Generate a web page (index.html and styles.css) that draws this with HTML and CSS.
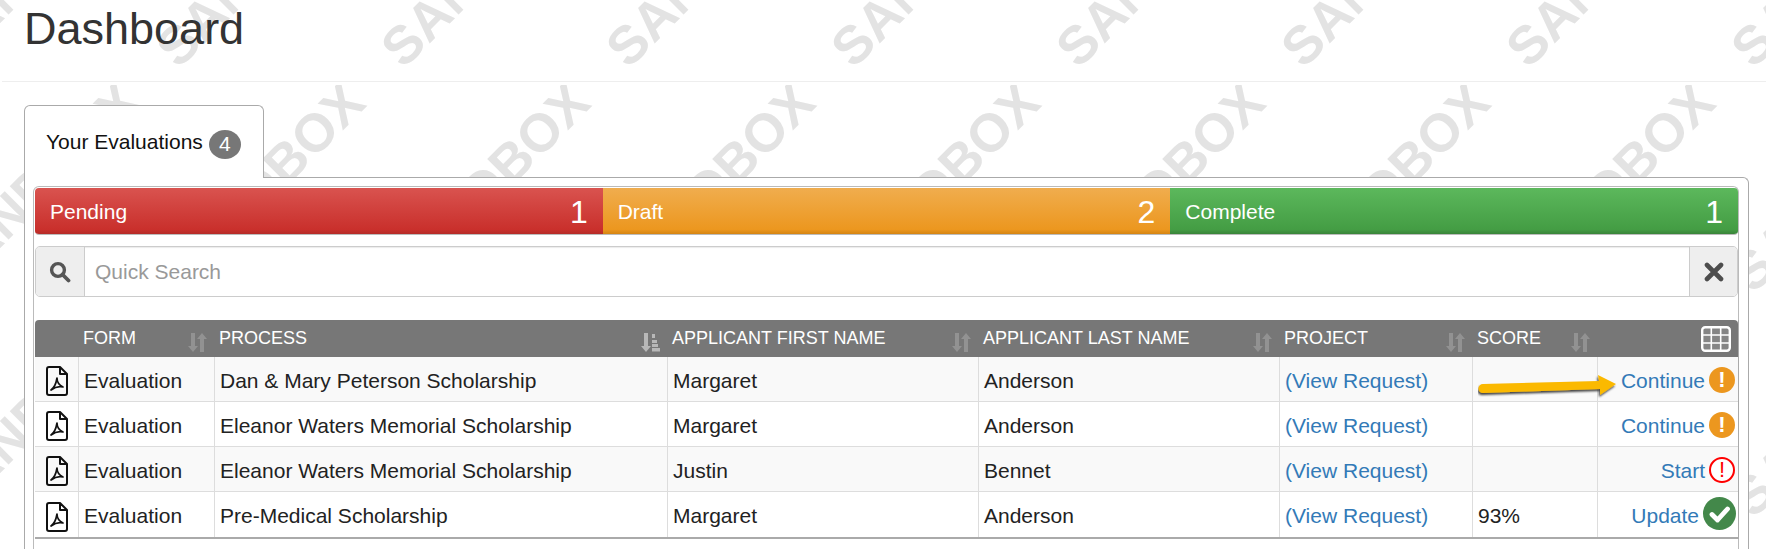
FILE: index.html
```html
<!DOCTYPE html>
<html lang="en">
<head>
<meta charset="utf-8">
<title>Dashboard</title>
<link rel="stylesheet" href="styles.css">
</head>
<body>
<svg class="watermark" width="1766" height="549" aria-hidden="true">
  <defs>
    <pattern id="wm" x="0" y="85" width="225" height="225" patternUnits="userSpaceOnUse">
      <text class="wm-text" transform="translate(35 102) rotate(-45)">SANDBOX</text>
      <text class="wm-text" transform="translate(260 102) rotate(-45)">SANDBOX</text>
    </pattern>
    <symbol id="i-sort" viewBox="0 0 19 19"><path d="M3 0h4v13h3l-5 6-5-6h3zM12 19h4V6h3l-5-6-5 6h3z" fill="#929292"/></symbol>
    <symbol id="i-sorted" viewBox="0 0 19 19"><path d="M3 0h4v13h3l-5 6-5-6h3z" fill="#b8b8b8"/><path d="M11 1h3v4h-3zM11 7h5v3h-5zM11 11h6v3h-6zM11 15h8v3.500h-8z" fill="#b8b8b8"/></symbol>
    <symbol id="i-pdf" viewBox="0 0 22 30"><path d="M3 1h11l7 7v19a2 2 0 0 1-2 2H3a2 2 0 0 1-2-2V3a2 2 0 0 1 2-2zM14 1v7h7" fill="none" stroke="#111" stroke-width="2" stroke-linejoin="round"/><path d="M5 24c3-2 5-6 6-12 0 5 2 7 6 9-4-1-8 0-12 3z" fill="none" stroke="#111" stroke-width="1.7" stroke-linejoin="round"/></symbol>
  </defs>
  <rect width="1766" height="549" fill="url(#wm)"/>
</svg>
<header class="page-head"><h1>Dashboard</h1></header>
<main class="content">
  <div class="tab"><span>Your Evaluations</span><span class="badge">4</span></div>
  <section class="panel">
    <div class="inner">
      <div class="progress">
        <div class="seg seg-red"><span>Pending</span><b>1</b></div>
        <div class="seg seg-orange"><span>Draft</span><b>2</b></div>
        <div class="seg seg-green"><span>Complete</span><b>1</b></div>
      </div>
      <div class="search">
        <div class="addon addon-l">
          <svg width="22" height="22" viewBox="0 0 22 22"><circle cx="9" cy="9" r="6.4" fill="none" stroke="#555" stroke-width="3.400"/><path d="M13.500 13.500L19.500 19.500" stroke="#555" stroke-width="3.800" stroke-linecap="round"/></svg>
        </div>
        <div class="search-input">Quick Search</div>
        <div class="addon addon-r">
          <svg width="20" height="20" viewBox="0 0 20 20"><path d="M3 3L17 17M17 3L3 17" stroke="#4d4d4d" stroke-width="4.600" stroke-linecap="round"/></svg>
        </div>
      </div>
      <table class="grid">
        <colgroup><col class="c0"><col class="c1"><col class="c2"><col class="c3"><col class="c4"><col class="c5"><col class="c6"><col class="c7"></colgroup>
        <thead>
          <tr>
            <th></th>
            <th><div class="th"><span>FORM</span><svg class="sort" width="19" height="19"><use href="#i-sort"/></svg></div></th>
            <th><div class="th"><span>PROCESS</span><svg class="sort" width="19" height="19"><use href="#i-sorted"/></svg></div></th>
            <th><div class="th"><span>APPLICANT FIRST NAME</span><svg class="sort" width="19" height="19"><use href="#i-sort"/></svg></div></th>
            <th><div class="th"><span>APPLICANT LAST NAME</span><svg class="sort" width="19" height="19"><use href="#i-sort"/></svg></div></th>
            <th><div class="th"><span>PROJECT</span><svg class="sort" width="19" height="19"><use href="#i-sort"/></svg></div></th>
            <th><div class="th"><span>SCORE</span><svg class="sort" width="19" height="19"><use href="#i-sort"/></svg></div></th>
            <th class="th-tools"><svg width="30" height="26" viewBox="0 0 30 26"><rect x="1.200" y="1.200" width="27.600" height="23.600" rx="3" fill="#858585" stroke="#fff" stroke-width="2.400"/><path d="M10.300 1v24M19.700 1v24M1 9h28M1 17h28" stroke="#fff" stroke-width="1.600"/></svg></th>
          </tr>
        </thead>
        <tbody>
          <tr class="odd">
            <td class="pdf"><svg class="pdf-icon" width="22" height="30"><use href="#i-pdf"/></svg></td>
            <td>Evaluation</td><td>Dan &amp; Mary Peterson Scholarship</td><td>Margaret</td><td>Anderson</td>
            <td><a href="#">(View Request)</a></td>
            <td class="arrow-cell"><svg class="arrow" width="146" height="38" viewBox="0 0 146 38"><defs><filter id="sh" x="-5%" y="-30%" width="110%" height="170%"><feDropShadow dx="-1" dy="2" stdDeviation="1.200" flood-color="#000" flood-opacity=".75"/></filter></defs><path d="M5 20L121 17L120 11L138 20L122 31L122 25L5 29a4.500 4.500 0 0 1 0-9z" fill="#fbb900" filter="url(#sh)"/></svg></td>
            <td class="act"><div class="act-in"><a href="#">Continue</a><span class="dot dot-o">!</span></div></td>
          </tr>
          <tr>
            <td class="pdf"><svg class="pdf-icon" width="22" height="30"><use href="#i-pdf"/></svg></td>
            <td>Evaluation</td><td>Eleanor Waters Memorial Scholarship</td><td>Margaret</td><td>Anderson</td>
            <td><a href="#">(View Request)</a></td>
            <td></td>
            <td class="act"><div class="act-in"><a href="#">Continue</a><span class="dot dot-o">!</span></div></td>
          </tr>
          <tr class="odd">
            <td class="pdf"><svg class="pdf-icon" width="22" height="30"><use href="#i-pdf"/></svg></td>
            <td>Evaluation</td><td>Eleanor Waters Memorial Scholarship</td><td>Justin</td><td>Bennet</td>
            <td><a href="#">(View Request)</a></td>
            <td></td>
            <td class="act"><div class="act-in"><a href="#">Start</a><span class="dot dot-r">!</span></div></td>
          </tr>
          <tr>
            <td class="pdf"><svg class="pdf-icon" width="22" height="30"><use href="#i-pdf"/></svg></td>
            <td>Evaluation</td><td>Pre-Medical Scholarship</td><td>Margaret</td><td>Anderson</td>
            <td><a href="#">(View Request)</a></td>
            <td>93%</td>
            <td class="act"><div class="act-in"><a href="#">Update</a><svg class="check" width="33" height="33" viewBox="0 0 33 33"><circle cx="16.500" cy="16.500" r="16.500" fill="#43884a"/><path d="M9 17.500l5.500 5.500L24.500 12" fill="none" stroke="#fff" stroke-width="4.800" stroke-linecap="round" stroke-linejoin="round"/></svg></div></td>
          </tr>
        </tbody>
      </table>
    </div>
  </section>
</main>
</body>
</html>
```
FILE: styles.css
```css
* { box-sizing: border-box; }
html, body { height: 549px; margin: 0; overflow: hidden; }
body {
  position: relative;
  background: #fff;
  color: #222;
  font-family: "Liberation Sans", Arial, sans-serif;
  font-size: 21px;
}
a { color: #337ab7; text-decoration: none; }

.watermark { position: absolute; left: 0; top: 0; z-index: -1; }
.wm-text {
  font-family: "Liberation Sans", Arial, sans-serif;
  font-weight: 700;
  font-size: 53.5px;
  fill: #e3e3e3;
  text-anchor: middle;
  dominant-baseline: central;
}

.page-head {
  height: 82px;
  margin-left: 2px;
  padding: 6px 0 0 22px;
  border-bottom: 1px solid #eee;
}
.page-head h1 {
  margin: 0;
  font-size: 45px;
  line-height: 46px;
  font-weight: 400;
  color: #333;
}

.content { padding: 23px 17px 0 24px; }

.tab {
  display: flex;
  align-items: center;
  gap: 6px;
  width: 240px;
  height: 73px;
  padding: 0 0 0 21px;
  margin-bottom: -1px;
  position: relative;
  z-index: 1;
  background: #fff;
  border: 1px solid #aaa;
  border-bottom: 0;
  border-radius: 6px 6px 0 0;
  color: #111;
}
.badge {
  display: flex;
  align-items: center;
  justify-content: center;
  width: 32px;
  height: 29px;
  margin-top: 4px;
  border-radius: 50%;
  background: #777;
  color: #fff;
  font-size: 21px;
}

.panel {
  height: 372px;
  padding: 8px 9px 0 8px;
  background: #fff;
  border: 1px solid #aaa;
  border-bottom: 0;
  border-radius: 0 6px 0 0;
}
.inner {
  height: 363px;
  padding: 1px 0 0 1px;
  border: 1px solid #bbb;
  border-bottom: 0;
  border-radius: 6px 6px 0 0;
}

.progress {
  display: flex;
  height: 47px;
  border-bottom: 1px solid #bbb;
  border-radius: 4px;
  overflow: hidden;
}
.seg {
  flex: 1 1 0;
  display: flex;
  align-items: center;
  justify-content: space-between;
  padding: 2px 15px 0 15px;
  color: #fff;
  font-size: 21px;
}
.seg b { font-weight: 400; font-size: 32px; }
.seg-red { background: linear-gradient(#d9534f, #c9302c 90%, #b52b27); }
.seg-orange { background: linear-gradient(#f0ad4e, #ec971f 90%, #d58512); }
.seg-green { background: linear-gradient(#5cb85c, #449d44 90%, #398439); }

.search {
  display: flex;
  height: 51px;
  margin-top: 11px;
  border: 1px solid #ccc;
  border-radius: 5px;
  box-shadow: inset 0 1px 1px rgba(0, 0, 0, .08);
  background: #fff;
}
.addon {
  display: flex;
  align-items: center;
  justify-content: center;
  background: #eee;
}
.addon-l { width: 49px; border-right: 1px solid #ccc; border-radius: 4px 0 0 4px; }
.addon-r { width: 48px; border-left: 1px solid #ccc; border-radius: 0 4px 4px 0; }
.search-input {
  flex: 1;
  display: flex;
  align-items: center;
  padding: 1px 0 0 10px;
  color: #999;
}

.grid {
  width: 1703px;
  margin-top: 23px;
  table-layout: fixed;
  border-collapse: separate;
  border-spacing: 0;
  border-bottom: 2px solid #aaa;
  border-right: 1px solid #aaa;
  background: #fff;
}
.c0 { width: 44px; }
.c1 { width: 136px; }
.c2 { width: 453px; }
.c3 { width: 311px; }
.c4 { width: 301px; }
.c5 { width: 193px; }
.c6 { width: 125px; }
.c7 { width: 140px; }

.grid th {
  height: 37px;
  padding: 0 0 0 4px;
  background: #777;
  color: #fff;
  font-size: 18px;
  font-weight: 400;
  text-align: left;
}
.grid thead tr th:first-child { border-radius: 4px 0 0 0; }
.grid thead tr th:last-child { border-radius: 0 4px 0 0; }
.th { display: flex; align-items: center; justify-content: space-between; padding-right: 8px; }
.sort { flex: none; position: relative; top: 4px; }
.grid .th-tools { padding: 0 7px 0 0; text-align: right; }
.th-tools svg { display: block; margin-left: auto; }

.grid td {
  height: 45px;
  padding: 3px 0 0 5px;
  border-right: 1px solid #ddd;
  border-bottom: 1px solid #ddd;
}
.grid tbody tr:last-child td { border-bottom: 0; }
.grid td:last-child { border-right: 0; }
.odd td { background: #f9f9f9; }
.grid .pdf { padding: 4px 0 0 11px; }
.pdf-icon { display: block; }

.arrow-cell { position: relative; overflow: visible; }
.arrow { position: absolute; left: 5px; top: 7px; z-index: 2; }

.grid .act { padding: 3px 2px 0 0; }
.act-in { display: flex; align-items: center; justify-content: flex-end; gap: 4px; padding-right: 1px; }
.dot {
  display: flex;
  align-items: center;
  justify-content: center;
  width: 26px;
  height: 26px;
  margin-top: -1px;
  border-radius: 50%;
  font-weight: 700;
  font-size: 22px;
  line-height: 1;
}
.dot-o { background: #ec971f; color: #fff; }
.dot-r { background: #fff; border: 2px solid #f00; color: #f00; font-weight: 400; }
.check { display: block; margin: -6px -1px 0 0; }
```
